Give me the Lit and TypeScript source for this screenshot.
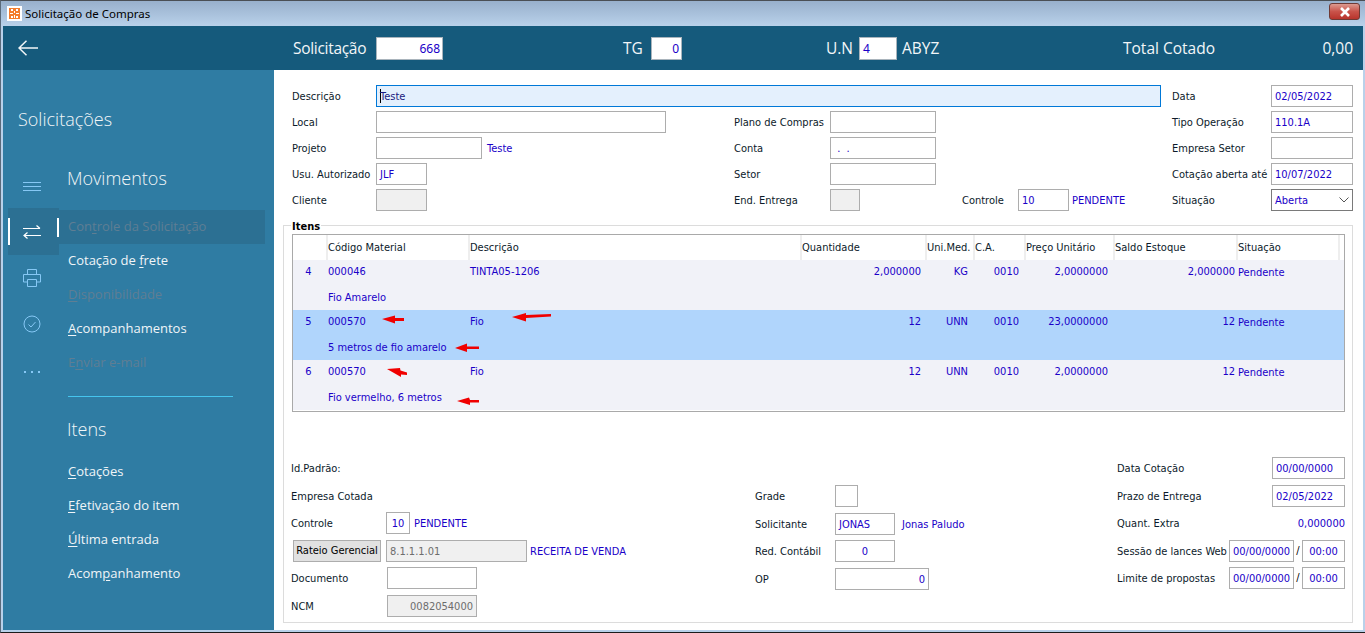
import { css, html, LitElement } from "lit";
import { customElement } from "lit/decorators.js";

const rows = [
  { n: "4", cod: "000046", desc: "TINTA05-1206", qtd: "2,000000", un: "KG", ca: "0010", preco: "2,0000000", saldo: "2,000000", obs: "Fio Amarelo", sel: false },
  { n: "5", cod: "000570", desc: "Fio", qtd: "12", un: "UNN", ca: "0010", preco: "23,0000000", saldo: "12", obs: "5 metros de fio amarelo", sel: true },
  { n: "6", cod: "000570", desc: "Fio", qtd: "12", un: "UNN", ca: "0010", preco: "2,0000000", saldo: "12", obs: "Fio vermelho, 6 metros", sel: false },
];

@customElement("app-root")
export class AppRoot extends LitElement {
  static styles = css`
    :host {
      display: block;
      width: 1365px;
      height: 633px;
      overflow: hidden;
      font-family: "DejaVu Sans Condensed", "Noto Sans", sans-serif;
      font-size: 11px;
      color: #000;
    }
    .window {
      height: 633px;
      box-sizing: border-box;
      display: flex;
      flex-direction: column;
      background: #b9d1ea;
      border-top: 1px solid #4a4f55;
      border-left: 1px solid #5a6a7a;
      border-bottom: 1px solid #1c1c1c;
      padding: 0 2px 2px 2px;
    }
    .titlebar {
      height: 25px;
      flex: none;
      margin: 0 -2px 0 -2px;
      padding: 0 5px 0 6px;
      display: flex;
      align-items: center;
      background: linear-gradient(#98b0cc, #b9d1ea);
      font-family: "Noto Sans", sans-serif;
      font-size: 11.5px;
    }
    .app-icon {
      width: 15px;
      height: 15px;
      margin-right: 3px;
    }
    .close {
      margin-left: auto;
      width: 31px;
      height: 17px;
      box-sizing: border-box;
      border: 1px solid #6f3a35;
      border-radius: 3px;
      background: linear-gradient(#dc9a90, #c9534a 50%, #b8342c);
      display: flex;
      align-items: center;
      justify-content: center;
      margin-top: -4px;
    }
    .head {
      height: 44px;
      flex: none;
      background: #155a7c;
      display: flex;
      align-items: center;
      color: #f2f6f8;
      font-family: "Open Sans", sans-serif;
      font-size: 15.5px;
    }
    .back {
      margin-left: 15px;
      width: 20px;
      height: 16px;
      margin-right: 255px;
    }
    .head .hbox {
      box-sizing: border-box;
      height: 23px;
      background: #fff;
      border: 1px solid #a9b4bc;
      color: #1a00c8;
      font-family: "Noto Sans", sans-serif;
      font-size: 12px;
      line-height: 21px;
      padding: 0 2px;
      text-align: right;
    }
    .sol-l {
      width: 83px;
      letter-spacing: -0.3px;
    }
    .sol-i {
      width: 67px;
      margin-right: 180px;
    }
    .tg-l {
      width: 28px;
    }
    .tg-i {
      width: 31px;
      margin-right: 144px;
    }
    .un-l {
      width: 33px;
    }
    .un-i {
      width: 38px;
      margin-right: 5px;
      text-align: left !important;
      padding-left: 3px !important;
    }
    .abyz {
      width: 221px;
    }
    .total {
      flex: 1;
    }
    .zero {
      margin-right: 10px;
    }
    .body {
      flex: 1;
      min-height: 0;
      display: flex;
    }
    .side {
      width: 271px;
      flex: none;
      background: #2f7ca3;
      color: #f2f6f8;
      font-family: "Open Sans", sans-serif;
      display: flex;
      flex-direction: column;
    }
    .side h1 {
      margin: 37px 0 0 15px;
      height: 25px;
      line-height: 25px;
      font-size: 18px;
      font-weight: 300;
    }
    .side-main {
      display: flex;
      margin-left: 5px;
      margin-top: 32px;
    }
    .rail {
      width: 51px;
      flex: none;
      display: flex;
      flex-direction: column;
      align-items: center;
      padding-top: 8px;
      color: #86c8f5;
    }
    .rail svg {
      display: block;
    }
    .rail-i {
      box-sizing: border-box;
      width: 51px;
      padding-right: 4px;
      display: flex;
      align-items: center;
      justify-content: center;
    }
    .rail-top {
      height: 20px;
      margin-bottom: 16px;
      align-items: flex-end;
    }
    .rail-sel {
      height: 47px;
      background: #2c7093;
      position: relative;
    }
    .rail-sel::before {
      content: "";
      position: absolute;
      left: 0;
      top: 10px;
      width: 2px;
      height: 27px;
      background: #fff;
    }
    .rail-sel::after {
      content: "";
      position: absolute;
      right: 0;
      top: 10px;
      width: 2px;
      height: 19px;
      background: #fff;
    }
    .rail-n {
      height: 46px;
    }
    .rail-dots {
      padding-top: 3px;
    }
    .menu {
      flex: 1;
      margin-top: 2px;
    }
    .menu h2 {
      margin: 0 0 0 8px;
      height: 25px;
      line-height: 25px;
      font-size: 18px;
      font-weight: 300;
    }
    .menu a {
      display: block;
      height: 34px;
      line-height: 33px;
      padding-left: 9px;
      font-size: 13px;
      color: #f0f5f8;
    }
    .menu u {
      text-underline-offset: 2px;
    }
    .menu a.off {
      color: #5f7e93;
    }
    .menu a.cur {
      background: #2c7093;
      width: 197px;
    }
    .list-1 {
      margin-top: 19px;
    }
    .rule {
      height: 1px;
      background: #45c5ee;
      width: 165px;
      margin: 16px 0 0 9px;
    }
    .itens-h {
      margin-top: 20px !important;
    }
    .list-2 {
      margin-top: 13px;
    }
    .main {
      flex: 1;
      background: #fff;
      padding: 15px 10px 0 9px;
      box-sizing: border-box;
      display: flex;
      flex-direction: column;
      color: #0c1a2a;
    }
    .top {
      display: grid;
      grid-template-columns: 93px 290px 68px 96px 106px 236px 99px 82px;
      grid-auto-rows: 22px;
      row-gap: 4px;
      margin-bottom: 14px;
    }
    .lab {
      line-height: 23px;
      white-space: nowrap;
      padding-left: 9px;
    }
    .lab2 {
      line-height: 23px;
      white-space: nowrap;
    }
    .fld {
      box-sizing: border-box;
      height: 22px;
      border: 1px solid #adadad;
      background: #fff;
      color: #1a00c8;
      line-height: 21px;
      padding: 0 3px;
      white-space: nowrap;
      flex: none;
    }
    .gray {
      background: #f0f0f0;
      color: #6d6d6d;
    }
    .r {
      text-align: right;
    }
    .c {
      text-align: center;
    }
    .blue {
      color: #1a00c8;
      line-height: 23px;
      white-space: nowrap;
    }
    .focus {
      grid-column: 2 / 7;
      width: 785px;
      background: #e4f0fd;
      border-color: #0078d7;
      color: #1a1a80;
    }
    .caret {
      display: inline-block;
      width: 1px;
      height: 14px;
      margin-right: -1px;
      vertical-align: -3px;
      background: #000;
    }
    .inl {
      display: flex;
      align-items: flex-start;
    }
    .sel {
      border-color: #7a7a7a;
      display: flex;
      align-items: center;
      justify-content: space-between;
    }
    .group {
      position: relative;
      flex: 1;
      margin-bottom: 7px;
      border: 1px solid #dcdcdc;
      padding: 8px 7px 0 8px;
      display: flex;
      flex-direction: column;
    }
    .legend {
      position: absolute;
      left: 7px;
      top: -6px;
      background: #fff;
      padding: 0 1px;
      font-weight: 700;
      line-height: 13px;
      color: #000;
    }
    .table {
      position: relative;
      border: 1px solid #a9a9a9;
      height: 176px;
      margin-bottom: 45px;
      flex: none;
    }
    .grid {
      display: grid;
      grid-template-columns: 33px 142px 332px 125px 48px 51px 89px 123px 102px 1fr;
    }
    .thead {
      height: 25px;
      line-height: 26px;
    }
    .thead div {
      border-left: 2px solid #eeeeee;
      white-space: nowrap;
      overflow: hidden;
    }
    .thead div:first-child {
      border-left: none;
    }
    .trow {
      height: 50px;
      background: #f1f2f8;
      color: #1a00c8;
      grid-template-rows: 23px 27px;
      line-height: 23px;
    }
    .trow.on {
      background: #b0d5fc;
    }
    .trow .num {
      text-align: center;
      padding-right: 2px;
    }
    .trow .obs {
      grid-row: 2;
      grid-column: 2 / 4;
      padding-left: 2px;
      line-height: 30px;
    }
    .trow .t {
      padding-left: 2px;
    }
    .trow .n {
      text-align: right;
      padding-right: 4px;
    }
    .trow .n5 {
      padding-right: 5px;
    }
    .trow .saldo {
      padding-right: 1px;
    }
    .trow .st {
      padding-left: 2px;
      line-height: 25px;
    }
    .arrows {
      position: absolute;
      left: 0;
      top: 0;
      width: 1053px;
      height: 176px;
      pointer-events: none;
    }
    .lower {
      display: flex;
      align-items: flex-start;
    }
    .col {
      display: grid;
      grid-auto-rows: 22px;
      row-gap: 5.6px;
    }
    .col-a {
      grid-template-columns: 96px auto;
      width: 464px;
      margin-left: -1px;
      flex: none;
    }
    .col-b {
      grid-template-columns: 80px auto;
      width: 362px;
      flex: none;
      margin-top: 28px;
    }
    .col-c {
      flex: 1;
      grid-template-columns: 111px 1fr;
    }
    .plain {
      line-height: 23px;
      white-space: nowrap;
    }
    .btn {
      box-sizing: border-box;
      width: 88px;
      height: 22px;
      border: 1px solid #adadad;
      background: #e1e1e1;
      line-height: 20px;
      text-align: center;
      white-space: nowrap;
      margin-left: 2px;
      color: #000;
    }
    .nudge {
      margin-left: -1px;
    }
    .end {
      display: flex;
      justify-content: flex-end;
    }
    .slash {
      width: 8px;
      text-align: center;
      line-height: 22px;
      color: #000;
    }
  `;

  render() {
    return html`
      <div class="window">
        <div class="titlebar">
          <svg class="app-icon" viewBox="0 0 15 15">
            <rect width="15" height="15" fill="#fff" />
            <rect x="2" y="2" width="11" height="11" fill="#f47c2c" />
            <path d="M4 3h2v2H4zM9 3h2v2H9zM7 5h1v2H7zM3 7h3v1H3zM9 7h3v1H9zM4 10h2v2H4zM7 9h1v3H7zM9 10h2v2H9z" fill="#fff" />
          </svg>
          Solicitação de Compras
          <div class="close">
            <svg width="12" height="10" viewBox="0 0 12 10"><path d="M2 1l8 8M10 1L2 9" stroke="#fff" stroke-width="2.6" /></svg>
          </div>
        </div>
        <div class="head">
          <svg class="back" viewBox="0 0 20 16"><path d="M20 8H1M8.500 .7L1 8l7.500 7.300" fill="none" stroke="#f2f6f8" stroke-width="1.500" /></svg>
          <span class="sol-l">Solicitação</span><div class="hbox sol-i">668</div>
          <span class="tg-l">TG</span><div class="hbox tg-i">0</div>
          <span class="un-l">U.N</span><div class="hbox un-i">4</div>
          <span class="abyz">ABYZ</span>
          <span class="total">Total Cotado</span>
          <span class="zero">0,00</span>
        </div>
        <div class="body">
          ${this.renderSide()}
          <div class="main">
            ${this.renderTop()}
            <div class="group">
              <div class="legend">Itens</div>
              ${this.renderTable()}
              ${this.renderLower()}
            </div>
          </div>
        </div>
      </div>
    `;
  }

  renderSide() {
    return html`
      <div class="side">
        <h1>Solicitações</h1>
        <div class="side-main">
          <div class="rail">
            <div class="rail-i rail-top">
              <svg width="18" height="10" viewBox="0 0 18 10"><path d="M0 .5h18M0 4.500h18M0 8.500h18" stroke="currentColor" /></svg>
            </div>
            <div class="rail-i rail-sel">
              <svg width="18" height="14" viewBox="0 0 18 14"><path d="M0 3.500h17M13.500 .5l3.500 3M18 10.500H1M4.500 7.500L1 10.500 4.500 13.500" fill="none" stroke="#fff" stroke-width="1.200" /></svg>
            </div>
            <div class="rail-i rail-n">
              <svg width="18" height="18" viewBox="0 0 18 18"><path d="M4.500 5V.5h9V5M4.500 13H.5V5.500h17V13h-4M4.500 10.500h9v7h-9z" fill="none" stroke="currentColor" /></svg>
            </div>
            <div class="rail-i rail-n">
              <svg width="18" height="18" viewBox="0 0 18 18"><circle cx="9" cy="9" r="8" fill="none" stroke="currentColor" /><path d="M5.500 9.500l2.500 2.500 4.500-5" fill="none" stroke="currentColor" /></svg>
            </div>
            <div class="rail-i rail-n rail-dots">
              <svg width="18" height="4" viewBox="0 0 18 4"><path d="M1 1h2v2H1zM8 1h2v2H8zM15 1h2v2h-2z" fill="currentColor" /></svg>
            </div>
          </div>
          <div class="menu">
            <h2>Movimentos</h2>
            <div class="list-1">
              <a class="off cur">Con<u>t</u>role da Solicitação</a>
              <a>Cotação de <u>f</u>rete</a>
              <a class="off"><u>D</u>isponibilidade</a>
              <a><u>A</u>companhamentos</a>
              <a class="off">E<u>n</u>viar e-mail</a>
            </div>
            <div class="rule"></div>
            <h2 class="itens-h">Itens</h2>
            <div class="list-2">
              <a><u>C</u>otações</a>
              <a><u>E</u>fetivação do item</a>
              <a><u>Ú</u>ltima entrada</a>
              <a>Acom<u>p</u>anhamento</a>
            </div>
          </div>
        </div>
      </div>
    `;
  }

  renderTop() {
    return html`
      <div class="top">
        <div class="lab">Descrição</div>
        <div class="fld focus"><span class="caret"></span>Teste</div>
        <div class="lab2">Data</div>
        <div class="fld">02/05/2022</div>

        <div class="lab">Local</div>
        <div class="fld"></div>
        <div></div>
        <div class="lab2">Plano de Compras</div>
        <div class="fld"></div>
        <div></div>
        <div class="lab2">Tipo Operação</div>
        <div class="fld">110.1A</div>

        <div class="lab">Projeto</div>
        <div class="inl">
          <div class="fld" style="width:106px"></div>
          <span class="blue" style="margin-left:5px">Teste</span>
        </div>
        <div></div>
        <div class="lab2">Conta</div>
        <div class="fld">&nbsp;.&nbsp;&nbsp;.</div>
        <div></div>
        <div class="lab2">Empresa Setor</div>
        <div class="fld"></div>

        <div class="lab">Usu. Autorizado</div>
        <div class="inl"><div class="fld" style="width:51px">JLF</div></div>
        <div></div>
        <div class="lab2">Setor</div>
        <div class="fld"></div>
        <div></div>
        <div class="lab2">Cotação aberta até</div>
        <div class="fld">10/07/2022</div>

        <div class="lab">Cliente</div>
        <div class="inl"><div class="fld gray" style="width:51px"></div></div>
        <div></div>
        <div class="lab2">End. Entrega</div>
        <div class="inl" style="grid-column:5 / 7">
          <div class="fld gray" style="width:30px"></div>
          <span class="lab2" style="margin-left:102px;width:56px">Controle</span>
          <div class="fld" style="width:51px">10</div>
          <span class="blue" style="margin-left:3px">PENDENTE</span>
        </div>
        <div class="lab2">Situação</div>
        <div class="fld sel">Aberta
          <svg width="10" height="6" viewBox="0 0 10 6"><path d="M.5 .5L5 5 9.500 .5" fill="none" stroke="#555" /></svg>
        </div>
      </div>
    `;
  }

  renderTable() {
    return html`
      <div class="table">
        <div class="grid thead">
          <div></div>
          <div>Código Material</div>
          <div>Descrição</div>
          <div>Quantidade</div>
          <div>Uni.Med.</div>
          <div>C.A.</div>
          <div>Preço Unitário</div>
          <div>Saldo Estoque</div>
          <div>Situação</div>
          <div></div>
        </div>
        ${rows.map(
          (r) => html`
            <div class="grid trow ${r.sel ? "on" : ""}">
              <div class="num">${r.n}</div>
              <div class="t">${r.cod}</div>
              <div class="t">${r.desc}</div>
              <div class="n">${r.qtd}</div>
              <div class="n n5">${r.un}</div>
              <div class="n n5">${r.ca}</div>
              <div class="n n5">${r.preco}</div>
              <div class="n saldo">${r.saldo}</div>
              <div class="st">Pendente</div>
              <div class="obs">${r.obs}</div>
            </div>
          `
        )}
        <svg class="arrows" viewBox="293 235 1053 176">
          <g fill="#f00000">
            <path d="M382 319l13-3.500V318h9v3h-9v2.500z" />
            <path d="M512 317l14-4v2l25-1v2.500L526 318v3.500z" />
            <path d="M455 348l12-4.500v3h12V349h-12v3z" />
            <path d="M387 369l13-1 .5 2.500 6.500 2V375l-6-.5V377z" />
            <path d="M457 401l12-3.500 1 2.500h9v2.500h-9V405z" />
          </g>
        </svg>
      </div>
    `;
  }

  renderLower() {
    return html`
      <div class="lower">
        <div class="col col-a">
          <div class="plain">Id.Padrão:</div><div></div>
          <div class="plain">Empresa Cotada</div><div></div>
          <div class="plain">Controle</div>
          <div class="inl nudge">
            <div class="fld c" style="width:24px;padding:0">10</div>
            <span class="blue" style="margin-left:4px">PENDENTE</span>
          </div>
          <div class="btn">Rateio Gerencial</div>
          <div class="inl nudge">
            <div class="fld gray" style="width:141px">8.1.1.1.01</div>
            <span class="blue" style="margin-left:3px">RECEITA DE VENDA</span>
          </div>
          <div class="plain">Documento</div>
          <div class="inl"><div class="fld" style="width:90px"></div></div>
          <div class="plain">NCM</div>
          <div class="inl"><div class="fld gray r" style="width:90px">0082054000</div></div>
        </div>
        <div class="col col-b">
          <div class="plain">Grade</div>
          <div class="inl"><div class="fld" style="width:23px"></div></div>
          <div class="plain">Solicitante</div>
          <div class="inl">
            <div class="fld" style="width:60px">JONAS</div>
            <span class="blue" style="margin-left:7px">Jonas Paludo</span>
          </div>
          <div class="plain">Red. Contábil</div>
          <div class="inl"><div class="fld c" style="width:60px">0</div></div>
          <div class="plain">OP</div>
          <div class="inl"><div class="fld r" style="width:94px">0</div></div>
        </div>
        <div class="col col-c">
          <div class="plain">Data Cotação</div>
          <div class="end"><div class="fld" style="width:73px">00/00/0000</div></div>
          <div class="plain">Prazo de Entrega</div>
          <div class="end"><div class="fld" style="width:73px">02/05/2022</div></div>
          <div class="plain">Quant. Extra</div>
          <div class="blue r">0,000000</div>
          <div class="plain">Sessão de lances Web</div>
          <div class="end">
            <div class="fld" style="width:65px">00/00/0000</div><span class="slash">/</span><div class="fld c" style="width:43px">00:00</div>
          </div>
          <div class="plain">Limite de propostas</div>
          <div class="end">
            <div class="fld" style="width:65px">00/00/0000</div><span class="slash">/</span><div class="fld c" style="width:43px">00:00</div>
          </div>
        </div>
      </div>
    `;
  }
}
